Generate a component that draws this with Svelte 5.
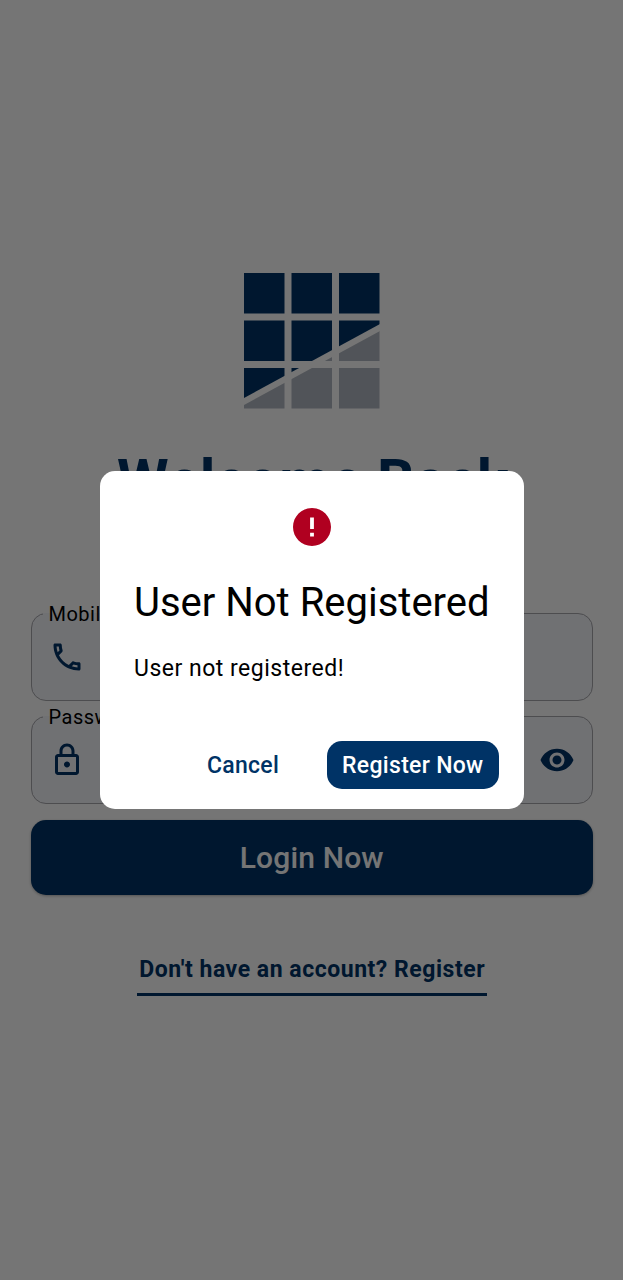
<script>
  const cells = [0, 47.5, 95];
</script>

<div class="screen">
  <main class="login">
    <svg class="logo" viewBox="0 0 136 136">
      <defs>
        <clipPath id="upper"><path d="M0 0H136V51L0 125Z" /></clipPath>
        <clipPath id="lower"><path d="M136 58V136H0V132Z" /></clipPath>
      </defs>
      {#each cells as y}
        {#each cells as x}
          <rect {x} {y} width="40.5" height="40.5" fill="#036" clip-path="url(#upper)" />
          <rect {x} {y} width="40.5" height="40.5" fill="#b1b8c2" clip-path="url(#lower)" />
        {/each}
      {/each}
    </svg>
    <h1>Welcome Back</h1>
    <fieldset>
      <legend>Mobile</legend>
      <svg class="icon" viewBox="0 0 24 24"><path d="M6.54 5c.06.89.21 1.76.45 2.59l-1.2 1.2c-.41-1.2-.67-2.47-.76-3.79h1.51m9.86 12.02c.85.24 1.72.39 2.6.45v1.49c-1.32-.09-2.59-.35-3.8-.75l1.2-1.19M7.5 3H4c-.55 0-1 .45-1 1 0 9.39 7.61 17 17 17 .55 0 1-.45 1-1v-3.49c0-.55-.45-1-1-1-1.24 0-2.45-.2-3.57-.57-.1-.04-.21-.05-.31-.05-.26 0-.51.1-.71.29l-2.2 2.2c-2.83-1.45-5.15-3.76-6.59-6.59l2.2-2.2c.28-.28.36-.67.25-1.02C8.7 6.45 8.5 5.25 8.5 4c0-.55-.45-1-1-1z" /></svg>
    </fieldset>
    <fieldset>
      <legend>Password</legend>
      <svg class="icon" viewBox="0 0 24 24"><path d="M18 8h-1V6c0-2.76-2.24-5-5-5S7 3.24 7 6v2H6c-1.1 0-2 .9-2 2v10c0 1.1.9 2 2 2h12c1.1 0 2-.9 2-2V10c0-1.1-.9-2-2-2zM9 6c0-1.66 1.34-3 3-3s3 1.34 3 3v2H9V6zm9 14H6V10h12v10zm-6-3c1.1 0 2-.9 2-2s-.9-2-2-2-2 .9-2 2 .9 2 2 2z" /></svg>
      <svg class="icon" viewBox="0 0 24 24"><path d="M12 4.5C7 4.5 2.73 7.61 1 12c1.73 4.39 6 7.5 11 7.5s9.27-3.11 11-7.5c-1.73-4.39-6-7.5-11-7.5zM12 17c-2.76 0-5-2.24-5-5s2.24-5 5-5 5 2.24 5 5-2.24 5-5 5zm0-8c-1.66 0-3 1.34-3 3s1.34 3 3 3 3-1.34 3-3-1.34-3-3-3z" /></svg>
    </fieldset>
    <button class="submit">Login Now</button>
    <a class="register" href="#register">Don't have an account? Register</a>
  </main>

  <div class="scrim">
    <div class="dialog" role="alertdialog" aria-labelledby="dialog-title">
      <svg class="alert" viewBox="2 2 20 20"><path d="M12 2C6.48 2 2 6.48 2 12s4.48 10 10 10 10-4.48 10-10S17.52 2 12 2zm1 15h-2v-2h2v2zm0-4h-2V7h2v6z" /></svg>
      <h2 id="dialog-title">User Not Registered</h2>
      <p>User not registered!</p>
      <div class="actions">
        <button class="cancel">Cancel</button>
        <button class="confirm">Register Now</button>
      </div>
    </div>
  </div>
</div>

<style>
  :global(body) { background: #fff; }
  .screen {
    position: relative;
    height: 1280px;
    overflow: hidden;
    font-family: Roboto, sans-serif;
    box-sizing: border-box;
  }
  button { border: 0; font-family: inherit; padding: 0; }
  .login {
    display: flex;
    flex-direction: column;
    align-items: center;
    padding: 272.5px 30px 0 30.5px;
  }
  .logo { width: 136px; height: 136px; display: block; }
  h1 {
    margin: 36px 0 0;
    height: 156px;
    font-size: 59px;
    line-height: 72px;
    font-weight: 700;
    padding-left: 2px;
    color: #036;
    white-space: nowrap;
  }
  fieldset {
    width: 100%;
    height: 100px;
    box-sizing: border-box;
    margin: 0 0 3px;
    padding: 12px 17px 0;
    border: 1.5px solid #a8a8ac;
    border-radius: 15px;
    display: flex;
    justify-content: space-between;
    align-items: center;
    background: #f5f6fb;
  }
  fieldset:nth-of-type(2) { margin-bottom: 16px; }
  legend {
    padding: 1px 6px 0;
    margin-left: -6px;
    font-size: 20px;
    line-height: 25px;
    letter-spacing: 0.5px;
    color: #000;
  }
  .icon { width: 36px; height: 36px; fill: #036; }
  .submit {
    width: 100%;
    height: 75px;
    border-radius: 15px;
    background: #036;
    color: #fff;
    font-size: 30px;
    line-height: 76px;
    font-weight: 500;
    letter-spacing: 0.15px;
    box-shadow: 0 1px 3px rgba(0, 0, 0, 0.3);
  }
  .register {
    margin-top: 57.5px;
    padding: 0 1.5px 0 2.5px;
    height: 41px;
    border-bottom: 3px solid #036;
    color: #036;
    font-size: 23px;
    line-height: 36px;
    font-weight: 700;
    letter-spacing: 0.53px;
    text-decoration: none;
    white-space: nowrap;
  }
  .scrim {
    position: absolute;
    inset: 0;
    display: grid;
    place-items: center;
    background: rgba(0, 0, 0, 0.54);
  }
  .dialog {
    width: 424px;
    height: 338px;
    box-sizing: border-box;
    padding: 37px 25px 20px 34.5px;
    border-radius: 15px;
    background: #fff;
    color: #000;
    display: flex;
    flex-direction: column;
  }
  .alert {
    width: 38px;
    height: 38px;
    align-self: center;
    margin-right: 9px;
    fill: #b00020;
  }
  h2 {
    margin: 32px 0 0;
    font-size: 40px;
    line-height: 50px;
    font-weight: 400;
    white-space: nowrap;
  }
  p {
    margin: 26px 0 0;
    font-size: 23px;
    line-height: 30px;
    letter-spacing: 0.5px;
  }
  .actions {
    margin-top: auto;
    display: flex;
    justify-content: flex-end;
    gap: 33px;
  }
  .actions button {
    height: 48px;
    padding: 0 15px;
    border-radius: 15px;
    font-size: 23px;
    font-weight: 500;
    letter-spacing: 0.3px;
    white-space: nowrap;
  }
  .cancel { background: none; color: #036; }
  .confirm { background: #036; color: #fff; }
</style>
